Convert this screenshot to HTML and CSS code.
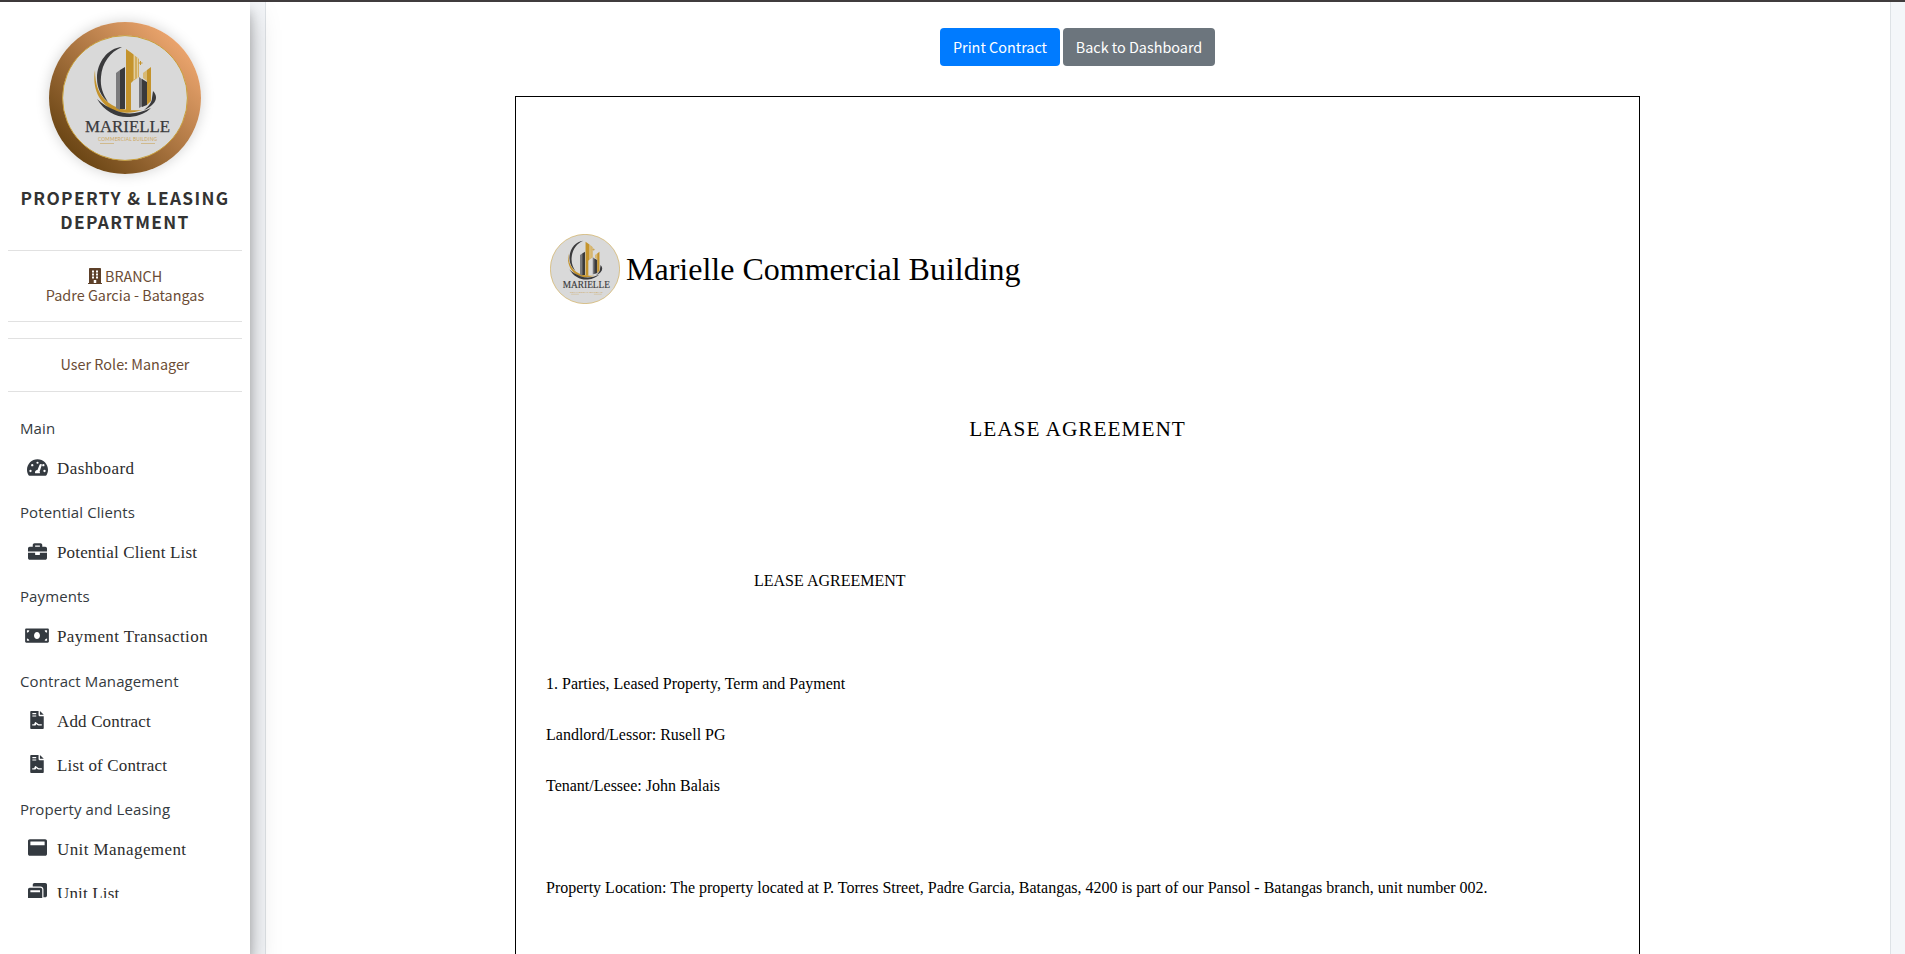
FILE: index.html
```html
<!DOCTYPE html>
<html lang="en">
<head>
<meta charset="utf-8">
<title>Lease Agreement</title>
<link rel="stylesheet" href="styles.css">
</head>
<body>
<svg class="defs" width="0" height="0">
  <symbol id="logo" viewBox="0 0 126 126" preserveAspectRatio="none">
    <circle cx="63" cy="63" r="62.4" fill="#d9d9d9" stroke="#c9a03c" stroke-width="1"/>
    <path d="M60 12C46 13 35 27 35 43c0 10 4 18 11 24-5-8-8-15-7-25 1-14 9-25 21-30z" fill="#3a3a3c"/>
    <path d="M33 35c-3 18 4 33 18 40 10 4 20 3 29 0-14 1-25-1-33-7C37 61 33 50 33 35z" fill="#c4932c"/>
    <path d="M35 64c8 13 20 19 33 18 9-1 16-4 21-9-12 6-24 7-34 3-8-3-15-7-20-12z" fill="#3a3a3c"/>
    <path d="M91 56c4 4 4 9 0 13-2 2-6 5-9 6 5-4 8-8 8-12z" fill="#3a3a3c"/>
    <path d="M54 38l4-3v40l-4-2z" fill="#7b7b7d"/><path d="M58 35l5-3v42l-5 0z" fill="#3a3a3c"/>
    <path d="M64 14l7 5v27l-2 2v27h-5z" fill="#c4932c"/><path d="M71 19l6 5v18l-6 4z" fill="#d2ad5e"/>
    <path d="M72.500 20v24M75.500 23v20" stroke="#eadcba" stroke-width=".7"/>
    <path d="M76.500 28h4M78.500 26v4" stroke="#c4932c" stroke-width="1"/>
    <path d="M77 42l4 3v26l-4 2z" fill="#77777a"/><path d="M80 44l5 3v23l-5 2z" fill="#3a3a3c"/>
    <path d="M81 38l4-3v11l-4-3z" fill="#d8b974"/><path d="M85 35l4-3v34l-4 4z" fill="#c4932c"/>
    <text x="23" y="96.500" textLength="85" lengthAdjust="spacingAndGlyphs" font-size="17.500" font-family="Liberation Serif" fill="#3a3a3c" stroke="#3a3a3c" stroke-width=".25">MARIELLE</text>
    <text x="36" y="105.500" textLength="59" font-size="4.800" font-family="Lato" fill="#cda65a">COMMERCIAL BUILDING</text>
    <path d="M38 108.500h14M79 108.500h14" stroke="#ceb27a" stroke-width=".8"/>
  </symbol>
  <symbol id="contract" viewBox="0 0 384 512"><path d="M236 0v124c0 13 11 24 24 24h124v340c0 13-11 24-24 24H24c-13 0-24-11-24-24V24C0 11 11 0 24 0zM60 60v30h110V60zm0 68v30h110v-30zm-4 246v38h82c15 0 22-9 28-24l10-22c13 31 30 46 62 46h90v-38h-82c-29 0-34-34-63-34-8-23-35-47-52-12l-22 46z" fill-rule="evenodd"/><path d="M276 0l108 108H276z"/></symbol>
</svg>
<div class="topbar"></div>
<div class="wrapper">
  <aside class="sidebar">
    <div class="brand"><svg><use href="#logo"/></svg></div>
    <h1 class="dept">PROPERTY &amp; LEASING<br>DEPARTMENT</h1>
    <div class="info branch">
      <div><svg class="building" viewBox="0 0 448 512"><path fill-rule="evenodd" d="M436 480h-20V24c0-13-11-24-24-24H56C43 0 32 11 32 24v456H12c-7 0-12 5-12 12v20h448v-20c0-7-5-12-12-12zM128 76h64v64h-64zm0 96h64v64h-64zm0 96h64v64h-64zM256 76h64v64h-64zm0 96h64v64h-64zm0 96h64v64h-64zM184 384h80v96h-80z"/></svg> BRANCH</div>
      <div>Padre Garcia - Batangas</div>
    </div>
    <div class="info role">User Role: Manager</div>
    <nav class="menu">
      <div class="head">Main</div>
      <a class="item"><span class="ic"><svg width="21" height="19" viewBox="0 0 576 512"><path fill-rule="evenodd" d="M288 32C129 32 0 161 0 320c0 53 14 102 39 145 6 9 16 15 27 15h444c11 0 21-6 27-15 25-43 39-92 39-145C576 161 447 32 288 32zm0 64a30 30 0 110 60 30 30 0 010-60zM96 384a32 32 0 110-64 32 32 0 010 64zm48-160a32 32 0 110-64 32 32 0 010 64zm247-65c12 4 19 17 15 30l-61 184c17 14 12 35 6 43H225c-20-40 5-92 62-94l61-148c4-12 30-19 43-15zm57 65a32 32 0 110-64 32 32 0 010 64zm32 160a32 32 0 110-64 32 32 0 010 64z"/></svg></span><span class="label wide">Dashboard</span></a>
      <div class="head">Potential Clients</div>
      <a class="item"><span class="ic"><svg width="19" height="19" viewBox="0 0 512 512"><path fill-rule="evenodd" d="M320 336c0 9-7 16-16 16h-96c-9 0-16-7-16-16v-48H0v144c0 26 22 48 48 48h416c26 0 48-22 48-48V288H320zm144-208h-80V80c0-26-22-48-48-48H176c-26 0-48 22-48 48v48H48c-26 0-48 22-48 48v80h512v-80c0-26-22-48-48-48zm-144 0H192V96h128z"/></svg></span><span class="label">Potential Client List</span></a>
      <div class="head">Payments</div>
      <a class="item"><span class="ic"><svg width="24" height="19" viewBox="0 0 640 512"><path fill-rule="evenodd" d="M608 64H32C14 64 0 78 0 96v320c0 18 14 32 32 32h576c18 0 32-14 32-32V96c0-18-14-32-32-32zM48 400v-64c35 0 64 29 64 64zm0-224v-64h64c0 35-29 64-64 64zm272 176c-44 0-80-43-80-96s36-96 80-96 80 43 80 96-36 96-80 96zm272 48h-64c0-35 29-64 64-64zm0-224c-35 0-64-29-64-64h64z"/></svg></span><span class="label wide">Payment Transaction</span></a>
      <div class="head">Contract Management</div>
      <a class="item"><span class="ic"><svg width="14" height="18"><use href="#contract"/></svg></span><span class="label">Add Contract</span></a>
      <a class="item"><span class="ic"><svg width="14" height="18"><use href="#contract"/></svg></span><span class="label">List of Contract</span></a>
      <div class="head">Property and Leasing</div>
      <a class="item"><span class="ic"><svg width="19" height="19" viewBox="0 0 512 512"><path fill-rule="evenodd" d="M464 32H48C22 32 0 54 0 80v352c0 26 22 48 48 48h416c26 0 48-22 48-48V80c0-26-22-48-48-48zm-16 160H64v-84c0-7 5-12 12-12h360c7 0 12 5 12 12z"/></svg></span><span class="label wide">Unit Management</span></a>
      <a class="item"><span class="ic"><svg width="19" height="19" viewBox="0 0 512 512"><path fill-rule="evenodd" d="M512 48v288c0 26-22 48-48 48h-48V176c0-44-36-80-80-80H128V48c0-26 22-48 48-48h288c26 0 48 22 48 48zM384 176v288c0 26-22 48-48 48H48c-26 0-48-22-48-48V176c0-26 22-48 48-48h288c26 0 48 22 48 48zm-60 76v-48c0-7-5-12-12-12H76c-7 0-12 5-12 12v48z"/></svg></span><span class="label">Unit List</span></a>
    </nav>
  </aside>
  <main class="content">
    <div class="actions"><a class="btn primary">Print Contract</a><a class="btn secondary">Back to Dashboard</a></div>
    <article class="paper">
      <header class="letterhead"><svg><use href="#logo"/></svg><span>Marielle Commercial Building</span></header>
      <h2 class="title">LEASE AGREEMENT</h2>
      <p class="subtitle">LEASE AGREEMENT</p>
      <p>1. Parties, Leased Property, Term and Payment</p>
      <p>Landlord/Lessor: Rusell PG</p>
      <p>Tenant/Lessee: John Balais</p>
      <p class="location">Property Location: The property located at P. Torres Street, Padre Garcia, Batangas, 4200 is part of our Pansol - Batangas branch, unit number 002.</p>
    </article>
  </main>
</div>
</body>
</html>
```
FILE: styles.css
```css
* { box-sizing: border-box; }
body {
  margin: 0;
  height: 954px;
  overflow: hidden;
  background: #f4f6f9;
  font-family: "Noto Sans CJK SC", "Noto Sans", sans-serif;
  font-size: 14.4px;
}
.defs { display: block; }
.topbar { height: 2px; background: #403c3d; }
.wrapper { display: flex; height: 952px; }
.sidebar {
  position: relative;
  z-index: 2;
  width: 250px;
  flex: none;
  padding: 20px 8px 0;
  background: #fff;
  color: #343a40;
  box-shadow: 0 14px 28px rgba(0,0,0,.25), 0 10px 10px rgba(0,0,0,.22);
}
.brand {
  display: flex;
  width: 152px;
  height: 152px;
  margin: 0 auto;
  padding: 13px;
  border-radius: 50%;
  background: linear-gradient(45deg, #63400f 10%, #e9a36c 85%);
  box-shadow: 0 0 14px rgba(0,0,0,.18);
}
.brand svg { width: 126px; height: 126px; }
.dept {
  margin: 12px 0 16px;
  font-size: 17.3px;
  line-height: 24px;
  font-weight: 700;
  letter-spacing: 1.35px;
  text-align: center;
  white-space: nowrap;
  color: #333;
}
.info {
  display: flex;
  flex-direction: column;
  justify-content: center;
  border: solid #e1e1e1;
  border-width: 1px 0;
  text-align: center;
  line-height: 19px;
  color: #6b4c35;
}
.branch { height: 72px; margin-bottom: 16px; padding-bottom: 2px; }
.role { height: 54px; padding-bottom: 3px; }
.building { width: 14px; height: 16px; vertical-align: -2px; fill: #5d4029; }
.menu { margin-top: 16px; height: 490px; overflow: hidden; }
.head {
  height: 40px;
  padding-left: 12px;
  line-height: 40px;
  font-family: "Open Sans", sans-serif;
  font-size: 15px;
  letter-spacing: .1px;
}
.item {
  display: flex;
  align-items: center;
  height: 40px;
  margin-bottom: 4.2px;
  padding-left: 16px;
  font-family: "Liberation Serif", serif;
  font-size: 17px;
  letter-spacing: .15px;
  white-space: nowrap;
  color: #2c2c2c;
}
.label { padding-top: 2px; }
.wide { letter-spacing: .42px; }
.ic { display: flex; justify-content: center; width: 27px; margin-right: 6px; padding: 0 1px 2px 0; fill: #343a40; }
.content {
  flex: none;
  width: 1626px;
  margin-left: 15px;
  padding: 26px 250px 0 249px;
  border: solid #dee2e6;
  border-width: 0 1px;
  background: #fff;
}
.actions { display: flex; justify-content: center; gap: 3px; margin-bottom: 30px; }
.btn { height: 38px; border-radius: 4px; line-height: 38px; text-align: center; color: #fff; }
.primary { width: 120px; background: #007bff; }
.secondary { width: 152px; background: #6c757d; }
.paper {
  height: 900px;
  padding: 137px 30px 0;
  border: 1px solid #000;
  font-family: "Liberation Serif", serif;
  font-size: 16px;
  color: #000;
}
.letterhead { display: flex; align-items: center; gap: 6px; padding-left: 4px; font-size: 32px; }
.letterhead svg { width: 70px; height: 70px; }
.title { margin: 112px 0 0; font-size: 21.3px; line-height: 26px; font-weight: 400; letter-spacing: 1px; text-align: center; }
.paper p { margin: 0; line-height: 18px; padding-bottom: 33px; white-space: nowrap; }
.paper .subtitle { padding: 130px 0 85px 208px; }
.paper .location { padding-top: 51px; }
```
